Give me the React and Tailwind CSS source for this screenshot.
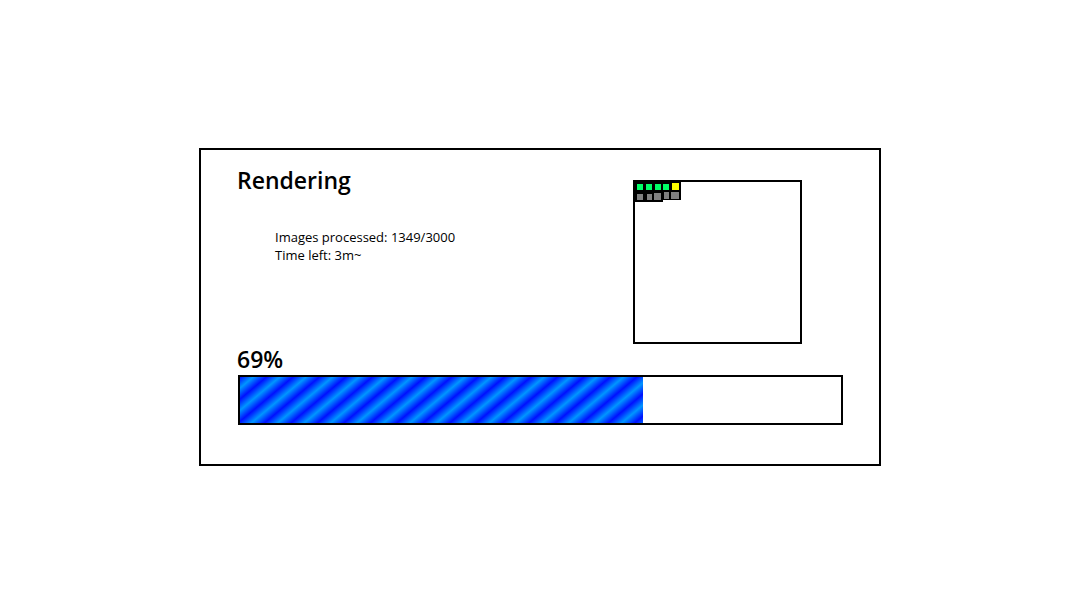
const PixelBadge = () => (
  <svg width="48" height="22" viewBox="0 0 48 22" className="absolute -top-[2px] -left-[2px]" shapeRendering="crispEdges">
    <path d="M0 0H48V20H30V22H0Z" fill="#000" />
    <rect x="4" y="4" width="6" height="6" fill="#00ff66" />
    <rect x="13" y="4" width="6" height="6" fill="#00ff66" />
    <rect x="22" y="4" width="6" height="6" fill="#00ff66" />
    <rect x="30" y="4" width="6" height="6" fill="#00ff66" />
    <rect x="39" y="3" width="7" height="7" fill="#ffff00" />
    <rect x="4" y="14" width="6" height="6" fill="#808080" />
    <rect x="14" y="14" width="5" height="6" fill="#808080" />
    <rect x="21" y="13" width="7" height="7" fill="#808080" />
    <rect x="31" y="12" width="5" height="7" fill="#808080" />
    <rect x="38" y="12" width="8" height="7" fill="#808080" />
  </svg>
);

const App = () => {
  const processed = 1349;
  const total = 3000;

  return (
    <div className="w-[1088px] h-[600px] bg-white font-['Open_Sans',sans-serif] text-black overflow-hidden">
      <div className="ml-[199px] mt-[148px] w-[682px] h-[318px] border-2 border-black">
        <div className="flex items-start pt-[14px]">
          <div className="w-[432px] pl-[36px]">
            <h1 className="text-[23px] leading-[32px] font-semibold">Rendering</h1>
            <div className="ml-[38px] mt-[32px] text-[13px] leading-[18px]">
              <p>Images processed: {processed}/{total}</p>
              <p>Time left: 3m~</p>
            </div>
          </div>
          <div className="relative mt-[16px] w-[169px] h-[164px] border-2 border-black">
            <PixelBadge />
          </div>
        </div>
        <div className="pl-[36px]">
          <div className="text-[23px] leading-[32px] font-semibold -mt-[1px]">69%</div>
          <div className="w-[605px] h-[50px] border-2 border-black ml-[1px]">
            <div className="h-full w-[403px] bg-[image:repeating-linear-gradient(140deg,#0010ff_0px,#0096ff_8.5px,#0010ff_17px)]" />
          </div>
        </div>
      </div>
    </div>
  );
};

export default App;
